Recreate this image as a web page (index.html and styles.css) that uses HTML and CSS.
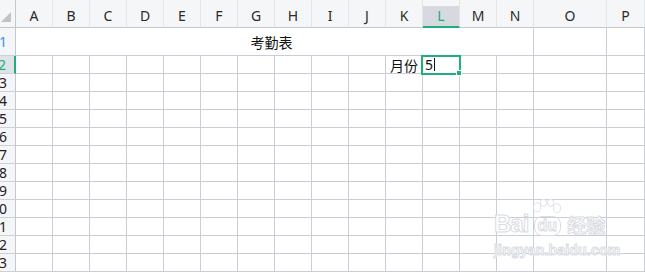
FILE: index.html
```html
<!DOCTYPE html>
<html lang="zh-CN">
<head>
<meta charset="utf-8">
<title>考勤表</title>
<link rel="stylesheet" href="styles.css">
</head>
<body>
<div class="sheet">
  <div class="corner"><div class="tri"></div></div>
  <div class="ch">A</div><div class="ch">B</div><div class="ch">C</div><div class="ch">D</div><div class="ch">E</div><div class="ch">F</div><div class="ch">G</div><div class="ch">H</div><div class="ch">I</div><div class="ch">J</div><div class="ch">K</div><div class="ch sel">L</div><div class="ch">M</div><div class="ch">N</div><div class="ch">O</div><div class="ch">P</div>

  <div class="rh r1"><span>1</span></div>
  <div class="c title">考勤表</div><div class="c"></div><div class="c"></div>

  <div class="rh rsel"><span>2</span></div>
  <div class="c"></div><div class="c"></div><div class="c"></div><div class="c"></div><div class="c"></div><div class="c"></div><div class="c"></div><div class="c"></div><div class="c"></div><div class="c"></div><div class="c right">月份</div><div class="c active">5<span class="caret"></span></div><div class="c"></div><div class="c"></div><div class="c"></div><div class="c"></div>

  <div class="rh"><span>3</span></div>
  <div class="c"></div><div class="c"></div><div class="c"></div><div class="c"></div><div class="c"></div><div class="c"></div><div class="c"></div><div class="c"></div><div class="c"></div><div class="c"></div><div class="c"></div><div class="c"></div><div class="c"></div><div class="c"></div><div class="c"></div><div class="c"></div>
  <div class="rh"><span>4</span></div>
  <div class="c"></div><div class="c"></div><div class="c"></div><div class="c"></div><div class="c"></div><div class="c"></div><div class="c"></div><div class="c"></div><div class="c"></div><div class="c"></div><div class="c"></div><div class="c"></div><div class="c"></div><div class="c"></div><div class="c"></div><div class="c"></div>
  <div class="rh"><span>5</span></div>
  <div class="c"></div><div class="c"></div><div class="c"></div><div class="c"></div><div class="c"></div><div class="c"></div><div class="c"></div><div class="c"></div><div class="c"></div><div class="c"></div><div class="c"></div><div class="c"></div><div class="c"></div><div class="c"></div><div class="c"></div><div class="c"></div>
  <div class="rh"><span>6</span></div>
  <div class="c"></div><div class="c"></div><div class="c"></div><div class="c"></div><div class="c"></div><div class="c"></div><div class="c"></div><div class="c"></div><div class="c"></div><div class="c"></div><div class="c"></div><div class="c"></div><div class="c"></div><div class="c"></div><div class="c"></div><div class="c"></div>
  <div class="rh"><span>7</span></div>
  <div class="c"></div><div class="c"></div><div class="c"></div><div class="c"></div><div class="c"></div><div class="c"></div><div class="c"></div><div class="c"></div><div class="c"></div><div class="c"></div><div class="c"></div><div class="c"></div><div class="c"></div><div class="c"></div><div class="c"></div><div class="c"></div>
  <div class="rh"><span>8</span></div>
  <div class="c"></div><div class="c"></div><div class="c"></div><div class="c"></div><div class="c"></div><div class="c"></div><div class="c"></div><div class="c"></div><div class="c"></div><div class="c"></div><div class="c"></div><div class="c"></div><div class="c"></div><div class="c"></div><div class="c"></div><div class="c"></div>
  <div class="rh"><span>9</span></div>
  <div class="c"></div><div class="c"></div><div class="c"></div><div class="c"></div><div class="c"></div><div class="c"></div><div class="c"></div><div class="c"></div><div class="c"></div><div class="c"></div><div class="c"></div><div class="c"></div><div class="c"></div><div class="c"></div><div class="c"></div><div class="c"></div>
  <div class="rh"><span>10</span></div>
  <div class="c"></div><div class="c"></div><div class="c"></div><div class="c"></div><div class="c"></div><div class="c"></div><div class="c"></div><div class="c"></div><div class="c"></div><div class="c"></div><div class="c"></div><div class="c"></div><div class="c"></div><div class="c"></div><div class="c"></div><div class="c"></div>
  <div class="rh"><span>11</span></div>
  <div class="c"></div><div class="c"></div><div class="c"></div><div class="c"></div><div class="c"></div><div class="c"></div><div class="c"></div><div class="c"></div><div class="c"></div><div class="c"></div><div class="c"></div><div class="c"></div><div class="c"></div><div class="c"></div><div class="c"></div><div class="c"></div>
  <div class="rh"><span>12</span></div>
  <div class="c"></div><div class="c"></div><div class="c"></div><div class="c"></div><div class="c"></div><div class="c"></div><div class="c"></div><div class="c"></div><div class="c"></div><div class="c"></div><div class="c"></div><div class="c"></div><div class="c"></div><div class="c"></div><div class="c"></div><div class="c"></div>
  <div class="rh"><span>13</span></div>
  <div class="c"></div><div class="c"></div><div class="c"></div><div class="c"></div><div class="c"></div><div class="c"></div><div class="c"></div><div class="c"></div><div class="c"></div><div class="c"></div><div class="c"></div><div class="c"></div><div class="c"></div><div class="c"></div><div class="c"></div><div class="c"></div>

  <div class="watermark">
    <div class="wm-top">
      <span class="wm-bai">Bai</span>
      <span class="wm-du">
        <svg class="paw" viewBox="0 0 40 26" width="36" height="24">
          <ellipse cx="9" cy="10" rx="4" ry="5"/>
          <ellipse cx="16" cy="5" rx="3.5" ry="4"/>
          <ellipse cx="24" cy="5" rx="3.5" ry="4"/>
          <ellipse cx="31" cy="11" rx="4" ry="5"/>
        </svg>
        <span class="du">du</span>
      </span>
      <span class="wm-jy">经验</span>
    </div>
    <div class="wm-url">jingyan.baidu.com</div>
  </div>
</div>
</body>
</html>
```
FILE: styles.css
```css
html, body {
  margin: 0;
  padding: 0;
  background: #ffffff;
}
body {
  width: 645px;
  height: 272px;
  overflow: hidden;
}
.sheet {
  position: relative;
  display: grid;
  grid-template-columns: 16px repeat(14, 37px) 73px 1fr;
  grid-template-rows: 28px 28px repeat(12, 18px);
  width: 645px;
  height: 272px;
  font-family: "Noto Sans CJK SC", "Noto Sans", sans-serif;
  color: #111;
}
.corner {
  box-sizing: border-box;
  background: #f5f6f8;
  border-right: 1px solid #c3c7cf;
  border-bottom: 1px solid #c3c7cf;
  display: flex;
  justify-content: flex-end;
  align-items: flex-end;
  padding: 0 4px 5px 0;
}
.tri {
  width: 10px;
  height: 10px;
  background: #c2c2c2;
  clip-path: polygon(100% 0, 100% 100%, 0 100%);
}
.ch {
  box-sizing: border-box;
  background: #f5f6f8;
  border-right: 1px solid #e2e5ea;
  border-bottom: 1px solid #c3c7cf;
  display: flex;
  justify-content: center;
  align-items: center;
  padding-top: 5px;
  font-family: "Noto Sans", "Open Sans", sans-serif;
  font-size: 14px;
  line-height: 16px;
  color: #2a2a2a;
}
.ch.sel {
  background: linear-gradient(#f5f6f8 0 6px, #d6d9df 6px);
  border-bottom: 2px solid #1fae7c;
  color: #1fae7c;
}
.rh {
  box-sizing: border-box;
  background: #f5f6f8;
  border-right: 1px solid #c3c7cf;
  border-bottom: 1px solid #cbd0da;
  display: flex;
  justify-content: flex-end;
  align-items: center;
  padding-right: 8px;
  overflow: hidden;
  white-space: nowrap;
  font-family: "Noto Sans", "Open Sans", sans-serif;
  font-size: 14px;
  line-height: 16px;
  color: #222;
}
.rh.r1 {
  color: #3a95e4;
}
.rh.rsel {
  background: #dfe2e7;
  border-right: 2px solid #1fae7c;
  color: #1fae7c;
}
.c {
  box-sizing: border-box;
  border-right: 1px solid #c8cdd8;
  border-bottom: 1px solid #c8cdd8;
  font-size: 14px;
  line-height: 16px;
  display: flex;
  align-items: center;
  padding: 0 3px;
  white-space: nowrap;
}
.c.title {
  grid-column: span 14;
  justify-content: center;
  padding: 0 6px 0 0;
}
.c.right {
  justify-content: flex-end;
  padding: 0 4px 0 0;
}
.c.active {
  position: relative;
  padding-left: 2px;
  font-family: "Noto Sans", sans-serif;
}
.c.active::after {
  content: "";
  position: absolute;
  top: -1px;
  left: -2px;
  right: -2px;
  bottom: -2px;
  border: 2px solid #1fae7c;
}
.c.active::before {
  content: "";
  position: absolute;
  right: -3px;
  bottom: -3px;
  width: 4px;
  height: 4px;
  background: #1fae7c;
  border: 1px solid #ffffff;
  z-index: 2;
}
.caret {
  display: inline-block;
  width: 1px;
  height: 13px;
  margin-left: 1px;
  background: #111;
}
.watermark {
  position: absolute;
  left: 494px;
  top: 196px;
  pointer-events: none;
  white-space: nowrap;
  color: #ffffff;
  -webkit-text-stroke: 1px #d9dce2;
  font-family: "Liberation Sans", sans-serif;
}
.wm-top {
  display: flex;
  align-items: flex-end;
  height: 40px;
}
.wm-bai {
  font-size: 24px;
  font-weight: 700;
  line-height: 24px;
  letter-spacing: -1px;
}
.wm-du {
  display: flex;
  flex-direction: column;
  align-items: center;
  margin-left: 1px;
}
.paw {
  fill: #ffffff;
  stroke: #d9dce2;
  stroke-width: 1;
  display: block;
  margin-bottom: -6px;
}
.du {
  font-size: 16px;
  font-weight: 700;
  line-height: 18px;
  padding: 0 3px;
  border: 1px solid #d9dce2;
  border-radius: 8px;
}
.wm-jy {
  font-family: "Noto Sans CJK SC", sans-serif;
  font-size: 19px;
  font-weight: 700;
  line-height: 22px;
  margin-left: 2px;
}
.wm-url {
  font-size: 14px;
  font-weight: 700;
  line-height: 16px;
  margin-top: 6px;
  letter-spacing: 0.2px;
}
```
